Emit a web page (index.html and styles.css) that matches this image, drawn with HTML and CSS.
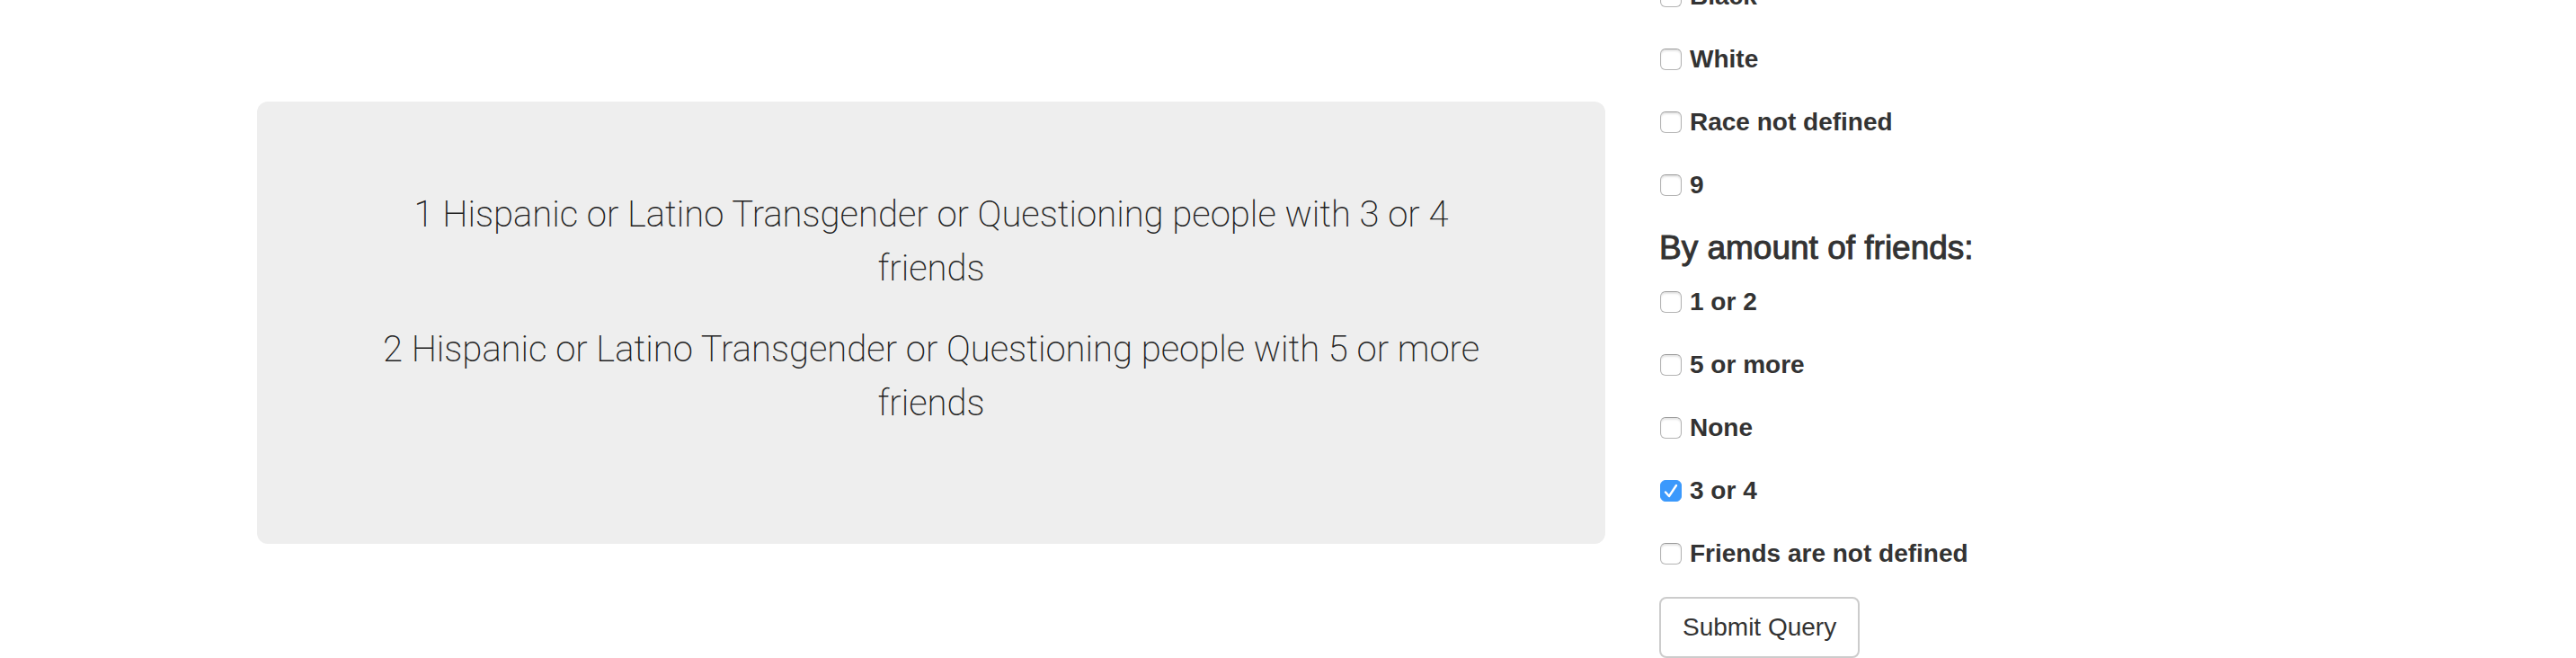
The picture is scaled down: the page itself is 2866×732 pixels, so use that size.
FILE: index.html
```
<!DOCTYPE html>
<html lang="en">
<head>
<meta charset="utf-8">
<title>Results</title>
<link rel="stylesheet" href="styles.css">
</head>
<body>
<div class="container">
  <main class="results">
    <div class="jumbotron">
      <p>1 Hispanic or Latino Transgender or Questioning people with 3 or 4 friends</p>
      <p>2 Hispanic or Latino Transgender or Questioning people with 5 or more friends</p>
    </div>
  </main>
  <form class="filters">
    <div class="group">
      <label class="option"><input type="checkbox" name="race">Black</label>
      <label class="option"><input type="checkbox" name="race">White</label>
      <label class="option"><input type="checkbox" name="race">Race not defined</label>
      <label class="option"><input type="checkbox" name="race">9</label>
    </div>
    <h4 class="heading">By amount of friends:</h4>
    <div class="group">
      <label class="option"><input type="checkbox" name="friends">1 or 2</label>
      <label class="option"><input type="checkbox" name="friends">5 or more</label>
      <label class="option"><input type="checkbox" name="friends">None</label>
      <label class="option"><input type="checkbox" name="friends" checked>3 or 4</label>
      <label class="option"><input type="checkbox" name="friends">Friends are not defined</label>
    </div>
    <button class="btn" type="submit">Submit Query</button>
  </form>
</div>
</body>
</html>
```
FILE: styles.css
```
* {
  box-sizing: border-box;
}

body {
  margin: 0;
  padding-right: 14px;
  overflow: hidden;
  background: #fff;
  color: #333;
  font-family: "Liberation Sans", Arial, sans-serif;
  font-size: 28px;
  line-height: 40px;
}

.container {
  display: grid;
  grid-template-columns: 2fr 1fr;
  max-width: 2340px;
  margin: 0 auto;
  align-items: start;
}

.results,
.filters {
  padding: 0 30px;
}

.jumbotron {
  margin-top: 113px;
  padding: 96px 120px;
  border-radius: 12px;
  background: #eee;
  text-align: center;
}

.jumbotron p {
  margin: 0 0 30px;
  color: #222;
  font-family: Roboto, "Liberation Sans", sans-serif;
  font-size: 40px;
  font-weight: 200;
  line-height: 60px;
}

.filters {
  display: flex;
  flex-direction: column;
  align-items: flex-start;
  margin-top: -24px;
}

.group {
  display: flex;
  flex-direction: column;
  align-items: flex-start;
  gap: 30px;
}

.option {
  display: flex;
  align-items: center;
  gap: 9px;
  font-weight: 700;
}

.option input {
  appearance: none;
  width: 24px;
  height: 24px;
  margin: 0 0 0 1px;
  border: 1px solid #b4b4b4;
  border-top-color: #999;
  border-radius: 6px;
  background: #fff;
  box-shadow: inset 0 2px 2px #e6e6e6;
}

.option input:checked {
  border-color: #3b99fc;
  background: #3b99fc url('data:image/svg+xml,<svg xmlns="http://www.w3.org/2000/svg" viewBox="0 0 24 24"><path d="M6 13.5 10 18 18 6" fill="none" stroke="white" stroke-width="2.4" stroke-linecap="round" stroke-linejoin="round"/></svg>') center / 24px 24px no-repeat;
  box-shadow: none;
}

.heading {
  margin: 30px 0 20px;
  font-size: 37px;
  font-weight: 500;
  line-height: 40px;
  -webkit-text-stroke: 1px #333;
}

.btn {
  margin-top: 28px;
  padding: 12px 24px;
  border: 2px solid #ccc;
  border-radius: 8px;
  background: #fff;
  color: #333;
  font: inherit;
}
```
